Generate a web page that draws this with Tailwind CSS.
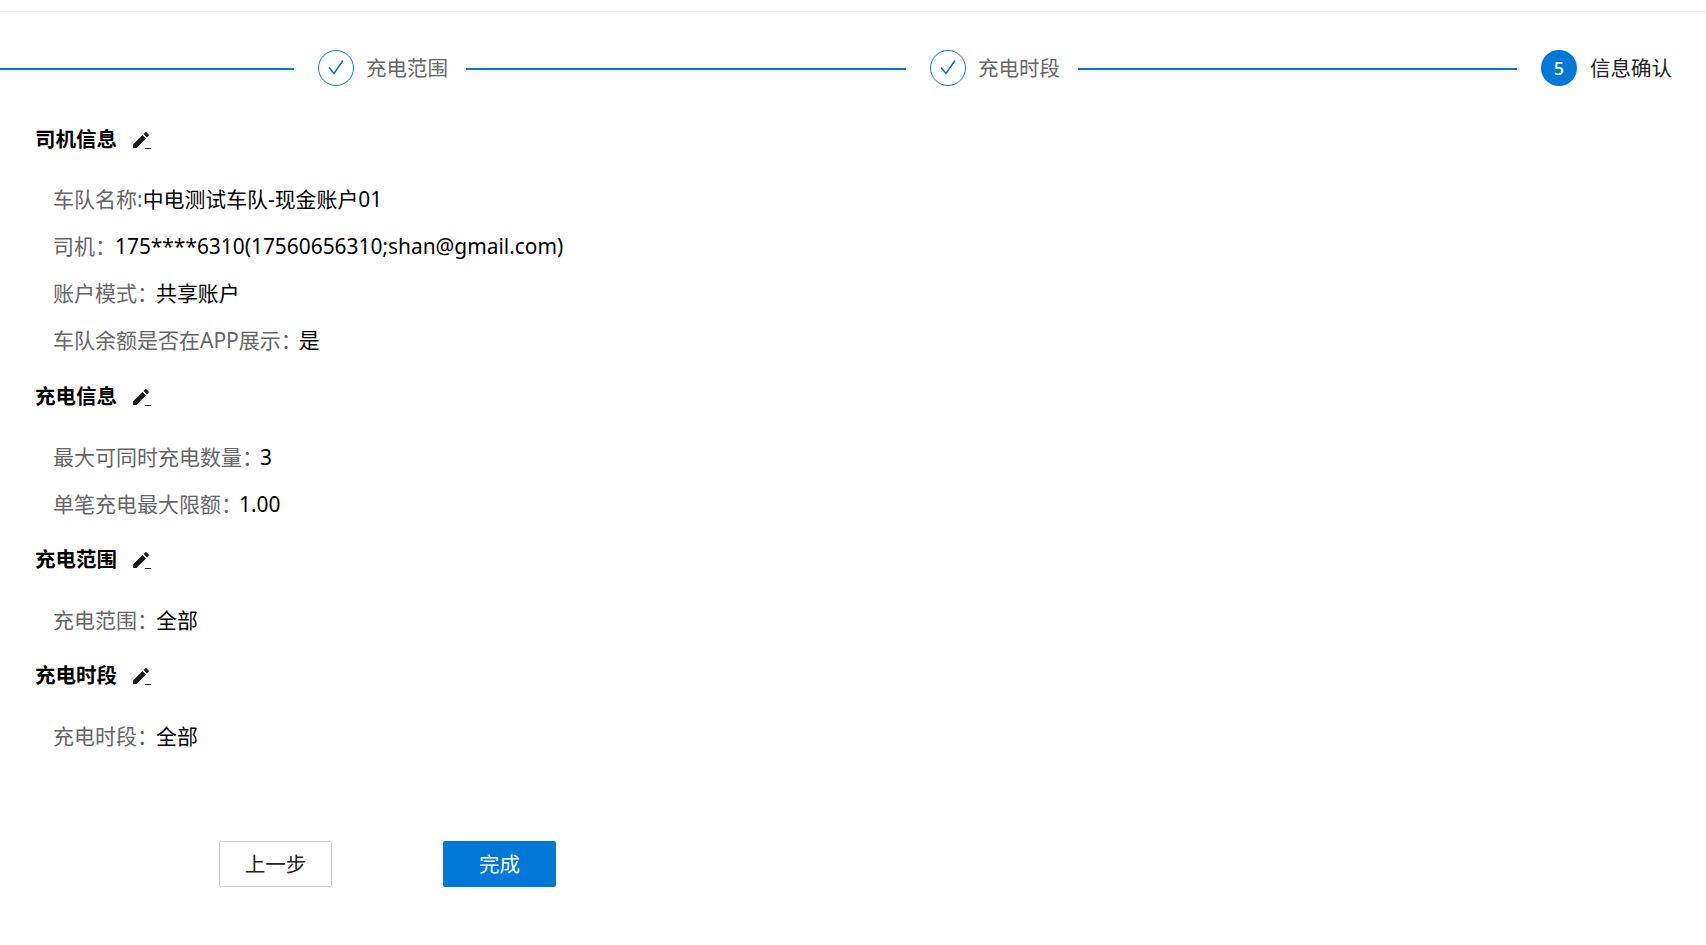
<!DOCTYPE html>
<html lang="zh">
<head>
<meta charset="utf-8">
<script src="https://cdn.jsdelivr.net/npm/@tailwindcss/browser@4"></script>
</head>
<body class="bg-white font-['Noto_Sans','Noto_Sans_CJK_SC',sans-serif] text-[21px] overflow-hidden">
<div class="w-[1706px] h-[945px] flex flex-col">
  <div class="h-[12px] border-b border-[#eeeeee] shrink-0"></div>
  <div class="h-[72px] mt-[20px] pr-[34px] flex items-center text-[#666666] text-[20.5px] shrink-0">
    <div class="w-[294px] h-[2px] bg-[#0078d7] mt-[1px]"></div>
    <div class="ml-[24px] w-[36px] h-[36px] rounded-full border border-[#0078d7] flex items-center justify-center">
      <svg width="20" height="20" viewBox="0 0 20 20" fill="none" stroke="#0078d7" stroke-width="1.6"><path d="M3 9.500l5 6L17 2.500"/></svg>
    </div>
    <span class="ml-[12px] w-[82px] leading-[28px] whitespace-nowrap">充电范围</span>
    <div class="ml-[18px] w-[440px] h-[2px] bg-[#0078d7] mt-[1px]"></div>
    <div class="ml-[24px] w-[36px] h-[36px] rounded-full border border-[#0078d7] flex items-center justify-center">
      <svg width="20" height="20" viewBox="0 0 20 20" fill="none" stroke="#0078d7" stroke-width="1.6"><path d="M3 9.500l5 6L17 2.500"/></svg>
    </div>
    <span class="ml-[12px] w-[82px] leading-[28px] whitespace-nowrap">充电时段</span>
    <div class="ml-[18px] w-[439px] h-[2px] bg-[#0078d7] mt-[1px]"></div>
    <div class="ml-[24px] w-[36px] h-[36px] rounded-full bg-[#0078d7] text-white text-[18px] font-medium flex items-center justify-center">5</div>
    <span class="ml-[13px] w-[82px] leading-[28px] whitespace-nowrap text-[#222222]">信息确认</span>
  </div>
  <main class="pl-[35px] mt-[21px]">
    <section>
      <h3 class="h-[28px] flex items-center font-bold text-black text-[20.5px] leading-[28px]">司机信息
        <svg class="ml-[15px] mt-[2px]" width="19" height="18" viewBox="0 0 19 18"><path d="M1 17v-3.400L10.600 4l3.400 3.400L4.400 17zM11.600 3l1.700-1.700a.8.8 0 0 1 1.100 0l2.300 2.300a.8.8 0 0 1 0 1.100L15 6.400z" fill="#1a1a1a"/><path d="M13 17.500h6" stroke="#1a1a1a" stroke-width="1"/></svg>
      </h3>
      <div class="pl-[18px] pt-[32px] flex flex-col gap-[19px] leading-[28px]">
        <p class="text-[#666666]">车队名称:<span class="text-black text-[20.9px]">中电测试车队-现金账户01</span></p>
        <p class="text-[#666666]">司机<span class="tracking-[-1px]">：</span><span class="text-black text-[20.9px]">175****6310(17560656310;shan@gmail.com)</span></p>
        <p class="text-[#666666]">账户模式<span class="tracking-[-2px]">：</span><span class="text-black text-[20.9px]">共享账户</span></p>
        <p class="text-[#666666]">车队余额是否在APP展示<span class="tracking-[-3px]">：</span><span class="text-black text-[20.9px]">是</span></p>
      </div>
    </section>
    <section class="mt-[28px]">
      <h3 class="h-[28px] flex items-center font-bold text-black text-[20.5px] leading-[28px]">充电信息
        <svg class="ml-[15px] mt-[2px]" width="19" height="18" viewBox="0 0 19 18"><path d="M1 17v-3.400L10.600 4l3.400 3.400L4.400 17zM11.600 3l1.700-1.700a.8.8 0 0 1 1.100 0l2.300 2.300a.8.8 0 0 1 0 1.100L15 6.400z" fill="#1a1a1a"/><path d="M13 17.500h6" stroke="#1a1a1a" stroke-width="1"/></svg>
      </h3>
      <div class="pl-[18px] pt-[33px] flex flex-col gap-[19px] leading-[28px]">
        <p class="text-[#666666]">最大可同时充电数量<span class="tracking-[-3px]">：</span><span class="text-black text-[20.9px]">3</span></p>
        <p class="text-[#666666]">单笔充电最大限额<span class="tracking-[-3px]">：</span><span class="text-black text-[20.9px]">1.00</span></p>
      </div>
    </section>
    <section class="mt-[27px]">
      <h3 class="h-[28px] flex items-center font-bold text-black text-[20.5px] leading-[28px]">充电范围
        <svg class="ml-[15px] mt-[2px]" width="19" height="18" viewBox="0 0 19 18"><path d="M1 17v-3.400L10.600 4l3.400 3.400L4.400 17zM11.600 3l1.700-1.700a.8.8 0 0 1 1.100 0l2.300 2.300a.8.8 0 0 1 0 1.100L15 6.400z" fill="#1a1a1a"/><path d="M13 17.500h6" stroke="#1a1a1a" stroke-width="1"/></svg>
      </h3>
      <div class="pl-[18px] pt-[33px] leading-[28px]">
        <p class="text-[#666666]">充电范围<span class="tracking-[-2px]">：</span><span class="text-black text-[20.9px]">全部</span></p>
      </div>
    </section>
    <section class="mt-[27px]">
      <h3 class="h-[28px] flex items-center font-bold text-black text-[20.5px] leading-[28px]">充电时段
        <svg class="ml-[15px] mt-[2px]" width="19" height="18" viewBox="0 0 19 18"><path d="M1 17v-3.400L10.600 4l3.400 3.400L4.400 17zM11.600 3l1.700-1.700a.8.8 0 0 1 1.100 0l2.300 2.300a.8.8 0 0 1 0 1.100L15 6.400z" fill="#1a1a1a"/><path d="M13 17.500h6" stroke="#1a1a1a" stroke-width="1"/></svg>
      </h3>
      <div class="pl-[18px] pt-[33px] leading-[28px]">
        <p class="text-[#666666]">充电时段<span class="tracking-[-2px]">：</span><span class="text-black text-[20.9px]">全部</span></p>
      </div>
    </section>
    <div class="mt-[91px] ml-[184px] flex gap-[111px]">
      <button class="w-[113px] h-[46px] rounded-[2px] border border-[#d0d0d0] bg-white text-[#222222] text-[20.5px]">上一步</button>
      <button class="w-[113px] h-[46px] rounded-[2px] bg-[#0078d7] text-white text-[20.5px]">完成</button>
    </div>
  </main>
</div>
</body>
</html>
